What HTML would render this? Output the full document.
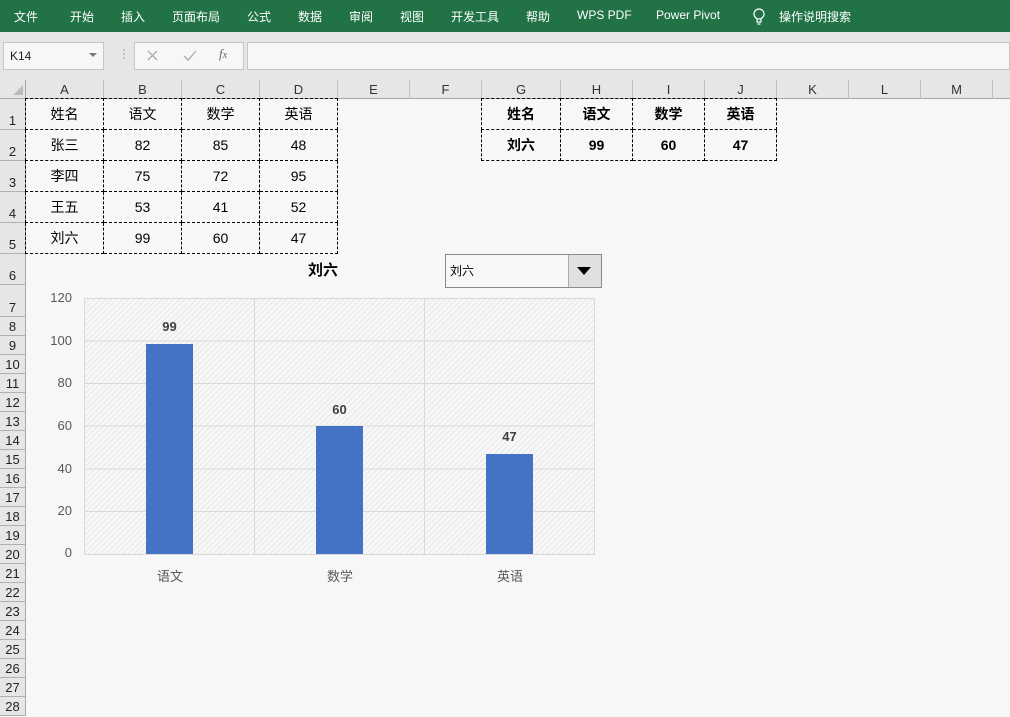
<!DOCTYPE html>
<html><head><meta charset="utf-8"><style>
*{margin:0;padding:0;box-sizing:border-box}
body{width:1010px;height:711px;overflow:hidden;background:#f7f7f7;font-family:"Liberation Sans","Noto Sans CJK SC",sans-serif;position:relative}
.a{position:absolute}
#rib{left:0;top:0;width:1010px;height:32px;background:#217346;color:#fff;font-size:12px}
#rib span{position:absolute;top:8px}
#tb{left:0;top:32px;width:1010px;height:48px;background:#e6e6e6}
.box{background:#f7f7f7;border:1px solid #c6c6c6}
.ch{top:80px;height:19px;background:#e6e6e6;border-right:1px solid #c0c0c0;border-bottom:1px solid #a8a8a8;font-size:13px;color:#333;text-align:center;line-height:19px}
.rh{left:0;width:26px;background:#e6e6e6;border-right:1px solid #a8a8a8;border-bottom:1px solid #b0b0b0;font-size:13px;color:#222;text-align:center}
.c{border:1px dashed #000;font-size:14px;text-align:center;line-height:30px;color:#000}
.b{font-weight:bold}
.yl{left:40px;width:32px;text-align:right;font-size:13px;color:#595959}
.bar{background:#4472c4;width:47px}
.dl{font-size:13px;font-weight:bold;color:#404040;width:47px;text-align:center}
.xl{font-size:13px;color:#595959;width:60px;text-align:center;top:566px}
</style></head><body>
<div id="rib" class="a">
<span style="left:14px">文件</span><span style="left:70px">开始</span><span style="left:121px">插入</span><span style="left:172px">页面布局</span><span style="left:247px">公式</span><span style="left:298px">数据</span><span style="left:349px">审阅</span><span style="left:400px">视图</span><span style="left:451px">开发工具</span><span style="left:526px">帮助</span><span style="left:577px">WPS PDF</span><span style="left:656px">Power Pivot</span>
<svg class="a" style="left:752px;top:8px" width="14" height="18"><circle cx="7" cy="6" r="5" fill="none" stroke="#fff" stroke-width="1.2"/><path d="M5 11v3h4v-3M5.5 16h3" stroke="#fff" fill="none" stroke-width="1.2"/></svg>
<span style="left:779px">操作说明搜索</span>
</div>
<div id="tb" class="a"></div>
<div class="a box" style="left:3px;top:42px;width:101px;height:28px;font-size:12px;line-height:26px;padding-left:6px;color:#222">K14</div>
<div class="a" style="left:89px;top:53px;border-left:4px solid transparent;border-right:4px solid transparent;border-top:4px solid #777"></div>
<div class="a" style="left:118px;top:47px;color:#999;font-size:12px">⋮</div>
<div class="a box" style="left:134px;top:42px;width:110px;height:28px"></div>
<svg class="a" style="left:146px;top:49px" width="60" height="14"><path d="M2 2l9 9M11 2l-9 9" stroke="#aaa" stroke-width="1.3" fill="none"/><path d="M38 7l4 4 8-9" stroke="#aaa" stroke-width="1.3" fill="none"/></svg>
<div class="a" style="left:219px;top:46px;color:#666;font-size:13px;font-style:italic;font-family:'Liberation Serif',serif">f<small>x</small></div>
<div class="a box" style="left:247px;top:42px;width:763px;height:28px"></div>
<div class="a" style="left:0;top:80px;width:26px;height:19px;background:#e6e6e6;border-right:1px solid #a8a8a8;border-bottom:1px solid #a8a8a8"></div>
<div class="a" style="left:13px;top:85px;width:0;height:0;border-left:10px solid transparent;border-bottom:10px solid #bbb"></div>
<div class="a ch" style="left:26px;width:78px">A</div><div class="a ch" style="left:104px;width:78px">B</div><div class="a ch" style="left:182px;width:78px">C</div><div class="a ch" style="left:260px;width:78px">D</div><div class="a ch" style="left:338px;width:72px">E</div><div class="a ch" style="left:410px;width:72px">F</div><div class="a ch" style="left:482px;width:79px">G</div><div class="a ch" style="left:561px;width:72px">H</div><div class="a ch" style="left:633px;width:72px">I</div><div class="a ch" style="left:705px;width:72px">J</div><div class="a ch" style="left:777px;width:72px">K</div><div class="a ch" style="left:849px;width:72px">L</div><div class="a ch" style="left:921px;width:72px">M</div><div class="a ch" style="left:993px;width:30px"></div>
<div class="a rh" style="top:99px;height:31px;line-height:44px">1</div><div class="a rh" style="top:130px;height:31px;line-height:44px">2</div><div class="a rh" style="top:161px;height:31px;line-height:44px">3</div><div class="a rh" style="top:192px;height:31px;line-height:44px">4</div><div class="a rh" style="top:223px;height:31px;line-height:44px">5</div><div class="a rh" style="top:254px;height:31px;line-height:44px">6</div><div class="a rh" style="top:285px;height:32px;line-height:46px">7</div>
<div class="a rh" style="top:317px;height:19px;line-height:20px">8</div><div class="a rh" style="top:336px;height:19px;line-height:20px">9</div><div class="a rh" style="top:355px;height:19px;line-height:20px">10</div><div class="a rh" style="top:374px;height:19px;line-height:20px">11</div><div class="a rh" style="top:393px;height:19px;line-height:20px">12</div><div class="a rh" style="top:412px;height:19px;line-height:20px">13</div><div class="a rh" style="top:431px;height:19px;line-height:20px">14</div><div class="a rh" style="top:450px;height:19px;line-height:20px">15</div><div class="a rh" style="top:469px;height:19px;line-height:20px">16</div><div class="a rh" style="top:488px;height:19px;line-height:20px">17</div><div class="a rh" style="top:507px;height:19px;line-height:20px">18</div><div class="a rh" style="top:526px;height:19px;line-height:20px">19</div><div class="a rh" style="top:545px;height:19px;line-height:20px">20</div><div class="a rh" style="top:564px;height:19px;line-height:20px">21</div><div class="a rh" style="top:583px;height:19px;line-height:20px">22</div><div class="a rh" style="top:602px;height:19px;line-height:20px">23</div><div class="a rh" style="top:621px;height:19px;line-height:20px">24</div><div class="a rh" style="top:640px;height:19px;line-height:20px">25</div><div class="a rh" style="top:659px;height:19px;line-height:20px">26</div><div class="a rh" style="top:678px;height:19px;line-height:20px">27</div><div class="a rh" style="top:697px;height:19px;line-height:20px">28</div>

<table class="a" style="left:25px;top:98px;border-collapse:collapse">
<tr><td class="c" style="width:78px;height:31px">姓名</td><td class="c" style="width:78px">语文</td><td class="c" style="width:78px">数学</td><td class="c" style="width:78px">英语</td></tr>
<tr><td class="c" style="height:31px">张三</td><td class="c">82</td><td class="c">85</td><td class="c">48</td></tr>
<tr><td class="c" style="height:31px">李四</td><td class="c">75</td><td class="c">72</td><td class="c">95</td></tr>
<tr><td class="c" style="height:31px">王五</td><td class="c">53</td><td class="c">41</td><td class="c">52</td></tr>
<tr><td class="c" style="height:31px">刘六</td><td class="c">99</td><td class="c">60</td><td class="c">47</td></tr>
</table>
<table class="a b" style="left:481px;top:98px;border-collapse:collapse">
<tr><td class="c b" style="width:79px;height:31px">姓名</td><td class="c b" style="width:72px">语文</td><td class="c b" style="width:72px">数学</td><td class="c b" style="width:72px">英语</td></tr>
<tr><td class="c b" style="height:31px">刘六</td><td class="c b">99</td><td class="c b">60</td><td class="c b">47</td></tr>
</table>

<div class="a b" style="left:308px;top:259px;font-size:15px;color:#000">刘六</div>
<div class="a" style="left:445px;top:254px;width:157px;height:34px;border:1px solid #8a8a8a;background:#f7f7f7;font-size:12px;line-height:32px;padding-left:4px">刘六</div>
<div class="a" style="left:568px;top:255px;width:33px;height:32px;background:#e0e0e0;border-left:1px solid #aaa"></div>
<div class="a" style="left:577px;top:267px;border-left:7px solid transparent;border-right:7px solid transparent;border-top:8px solid #000"></div>

<svg class="a" style="left:84px;top:298px" width="511" height="257">
<defs><pattern id="h" width="4" height="4" patternUnits="userSpaceOnUse" patternTransform="rotate(45)"><rect width="4" height="4" fill="#f7f7f7"/><line x1="0" y1="0" x2="0" y2="4" stroke="#dedede" stroke-width="1.2"/></pattern></defs>
<rect x="0.5" y="0.5" width="510" height="256" fill="url(#h)" stroke="#d9d9d9"/>
<g stroke="#d9d9d9"><line x1="0" x2="510" y1="43" y2="43"/><line x1="0" x2="510" y1="85.5" y2="85.5"/><line x1="0" x2="510" y1="128" y2="128"/><line x1="0" x2="510" y1="171" y2="171"/><line x1="0" x2="510" y1="213.5" y2="213.5"/><line x1="170.5" x2="170.5" y1="0" y2="256"/><line x1="340.5" x2="340.5" y1="0" y2="256"/></g>
</svg>
<div class="a yl" style="top:290px">120</div><div class="a yl" style="top:333px">100</div><div class="a yl" style="top:375px">80</div><div class="a yl" style="top:418px">60</div><div class="a yl" style="top:461px">40</div><div class="a yl" style="top:503px">20</div><div class="a yl" style="top:545px">0</div>
<div class="a bar" style="left:146px;top:344px;height:210px"></div>
<div class="a bar" style="left:316px;top:426px;height:128px"></div>
<div class="a bar" style="left:486px;top:454px;height:100px"></div>
<div class="a dl" style="left:146px;top:319px">99</div>
<div class="a dl" style="left:316px;top:402px">60</div>
<div class="a dl" style="left:486px;top:429px">47</div>
<div class="a xl" style="left:140px">语文</div><div class="a xl" style="left:310px">数学</div><div class="a xl" style="left:480px">英语</div>
</body></html>
